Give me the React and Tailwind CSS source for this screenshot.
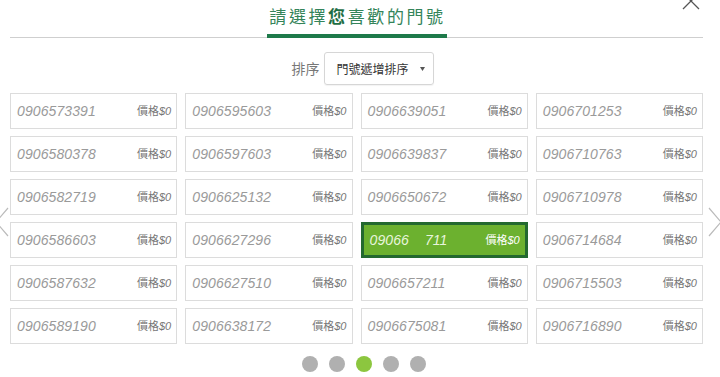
import { useState } from "react";

const columns = [
    ["0906573391", "0906580378", "0906582719", "0906586603", "0906587632", "0906589190"],
    ["0906595603", "0906597603", "0906625132", "0906627296", "0906627510", "0906638172"],
    ["0906639051", "0906639837", "0906650672", "09066    711", "0906657211", "0906675081"],
    ["0906701253", "0906710763", "0906710978", "0906714684", "0906715503", "0906716890"],
];

// grid is row-major, data reads top-down per column
const rows = columns[0].map((_, r) => columns.map((col) => col[r]));

function NumberCell({ number, selected }) {
    return (
        <div
            className={`h-[36px] flex items-center justify-between pl-[6px] pr-[5px] ${
                selected
                    ? "bg-[#6cb12f] border-[3px] border-[#23692f] text-[#e8f5dc]"
                    : "bg-white border border-[#dcdcdc] text-[#9a9a9a]"
            }`}
        >
            <span className="text-[14px] italic font-['Liberation_Sans',sans-serif] whitespace-pre tracking-[0.1px]">
                {number}
            </span>
            <span
                className={`text-[11px] font-['Liberation_Sans','Noto_Sans_CJK_TC',sans-serif] ${
                    selected ? "text-white" : "text-[#777]"
                }`}
            >
                價格<span className="italic">$0</span>
            </span>
        </div>
    );
}

function App() {
    const [page] = useState(2);

    return (
        <div className="relative w-[720px] h-[377px] bg-white overflow-hidden font-['Noto_Sans_CJK_TC',sans-serif]">
            {/* close button, cut off at the top */}
            <svg className="absolute left-[681px] top-[-9px]" width="20" height="20" viewBox="0 0 20 20">
                <path d="M2 2 L18 18 M18 2 L2 18" stroke="#555" strokeWidth="1.3" fill="none" />
            </svg>

            {/* carousel arrows */}
            <svg className="absolute left-[-6px] top-[206px]" width="16" height="32" viewBox="0 0 16 32">
                <path d="M14 2 L2 16 L14 30" stroke="#bbb" strokeWidth="1.2" fill="none" />
            </svg>
            <svg className="absolute left-[707px] top-[206px]" width="16" height="32" viewBox="0 0 16 32">
                <path d="M2 2 L14 16 L2 30" stroke="#bbb" strokeWidth="1.2" fill="none" />
            </svg>

            <div className="pl-[10px] pr-[17px]">
                <div className="flex justify-center border-b border-[#cfcfcf] h-[38px]">
                    <div className="border-b-[4px] border-[#1e7a4a] w-[180px] flex justify-center pt-[5px] h-[38px] -mb-px">
                        <span className="text-[17px] leading-[22px] text-[#34845a] tracking-[2.6px] pl-[2px] whitespace-nowrap">
                            請選擇<span className="font-bold text-[#1f6e44]">您</span>喜歡的門號
                        </span>
                    </div>
                </div>

                <div className="flex justify-center items-center gap-[4px] mt-[14px] pl-[12px]">
                    <span className="text-[14px] text-[#777]">排序</span>
                    <div className="w-[110px] h-[33px] border border-[#d6d6d6] rounded-[3px] flex items-center justify-between pl-[12px] pr-[8px] shadow-[0_1px_1px_rgba(0,0,0,0.05)]">
                        <span className="text-[12px] text-[#333]">門號遞增排序</span>
                        <svg width="5" height="4" viewBox="0 0 5 4">
                            <path d="M0 0 L5 0 L2.5 4 Z" fill="#555" />
                        </svg>
                    </div>
                </div>

                <div className="grid grid-cols-4 gap-x-[8px] gap-y-[7px] mt-[8px]">
                    {rows.flat().map((n, i) => (
                        <NumberCell key={i} number={n} selected={n === "09066    711"} />
                    ))}
                </div>

                <div className="flex justify-center gap-[11px] mt-[12px] pl-[14px]">
                    {[0, 1, 2, 3, 4].map((i) => (
                        <span
                            key={i}
                            className={`w-[16px] h-[16px] rounded-full ${i === page ? "bg-[#8cc63f]" : "bg-[#b0b0b0]"}`}
                        />
                    ))}
                </div>
            </div>
        </div>
    );
}

export default App;
